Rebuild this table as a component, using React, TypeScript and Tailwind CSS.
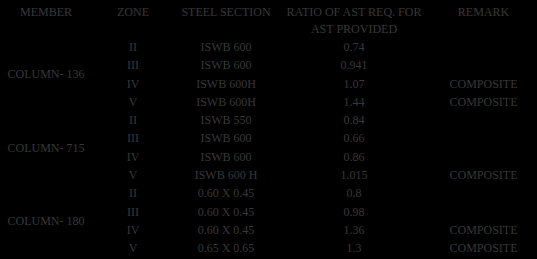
const groups = [
  {
    member: "COLUMN- 136",
    rows: [
      { zone: "II", section: "ISWB 600", ratio: "0.74", remark: "" },
      { zone: "III", section: "ISWB 600", ratio: "0.941", remark: "" },
      { zone: "IV", section: "ISWB 600H", ratio: "1.07", remark: "COMPOSITE" },
      { zone: "V", section: "ISWB 600H", ratio: "1.44", remark: "COMPOSITE" },
    ],
  },
  {
    member: "COLUMN- 715",
    rows: [
      { zone: "II", section: "ISWB 550", ratio: "0.84", remark: "" },
      { zone: "III", section: "ISWB 600", ratio: "0.66", remark: "" },
      { zone: "IV", section: "ISWB 600", ratio: "0.86", remark: "" },
      { zone: "V", section: "ISWB 600 H", ratio: "1.015", remark: "COMPOSITE" },
    ],
  },
  {
    member: "COLUMN- 180",
    rows: [
      { zone: "II", section: "0.60 X 0.45", ratio: "0.8", remark: "" },
      { zone: "III", section: "0.60 X 0.45", ratio: "0.98", remark: "" },
      { zone: "IV", section: "0.60 X 0.45", ratio: "1.36", remark: "COMPOSITE" },
      { zone: "V", section: "0.65 X 0.65", ratio: "1.3", remark: "COMPOSITE" },
    ],
  },
];

const cols = "grid grid-cols-[92px_82px_104px_152px_107px]";

export default function App() {
  return (
    <div
      className="w-[537px] h-[259px] bg-black text-[#383838] text-[12px] overflow-hidden pt-[4px]"
      style={{ fontFamily: '"Liberation Serif", "Times New Roman", serif' }}
    >
      {/* header */}
      <div className={`${cols} leading-[17px] text-center items-start h-[34px]`}>
        <div>MEMBER</div>
        <div>ZONE</div>
        <div>STEEL SECTION</div>
        <div>
          RATIO OF AST REQ. FOR
          <br />
          AST PROVIDED
        </div>
        <div>REMARK</div>
      </div>

      {groups.map((g) => (
        <div key={g.member} className={`${cols} grid-rows-[repeat(4,18.3px)] text-center leading-[18.3px]`}>
          <div className="row-span-4 flex items-center justify-center">{g.member}</div>
          {g.rows.map((r, i) => (
            <div key={i} className="col-start-2 col-span-4 grid grid-cols-[82px_104px_152px_107px]">
              <div>{r.zone}</div>
              <div>{r.section}</div>
              <div>{r.ratio}</div>
              <div>{r.remark}</div>
            </div>
          ))}
        </div>
      ))}
    </div>
  );
}
